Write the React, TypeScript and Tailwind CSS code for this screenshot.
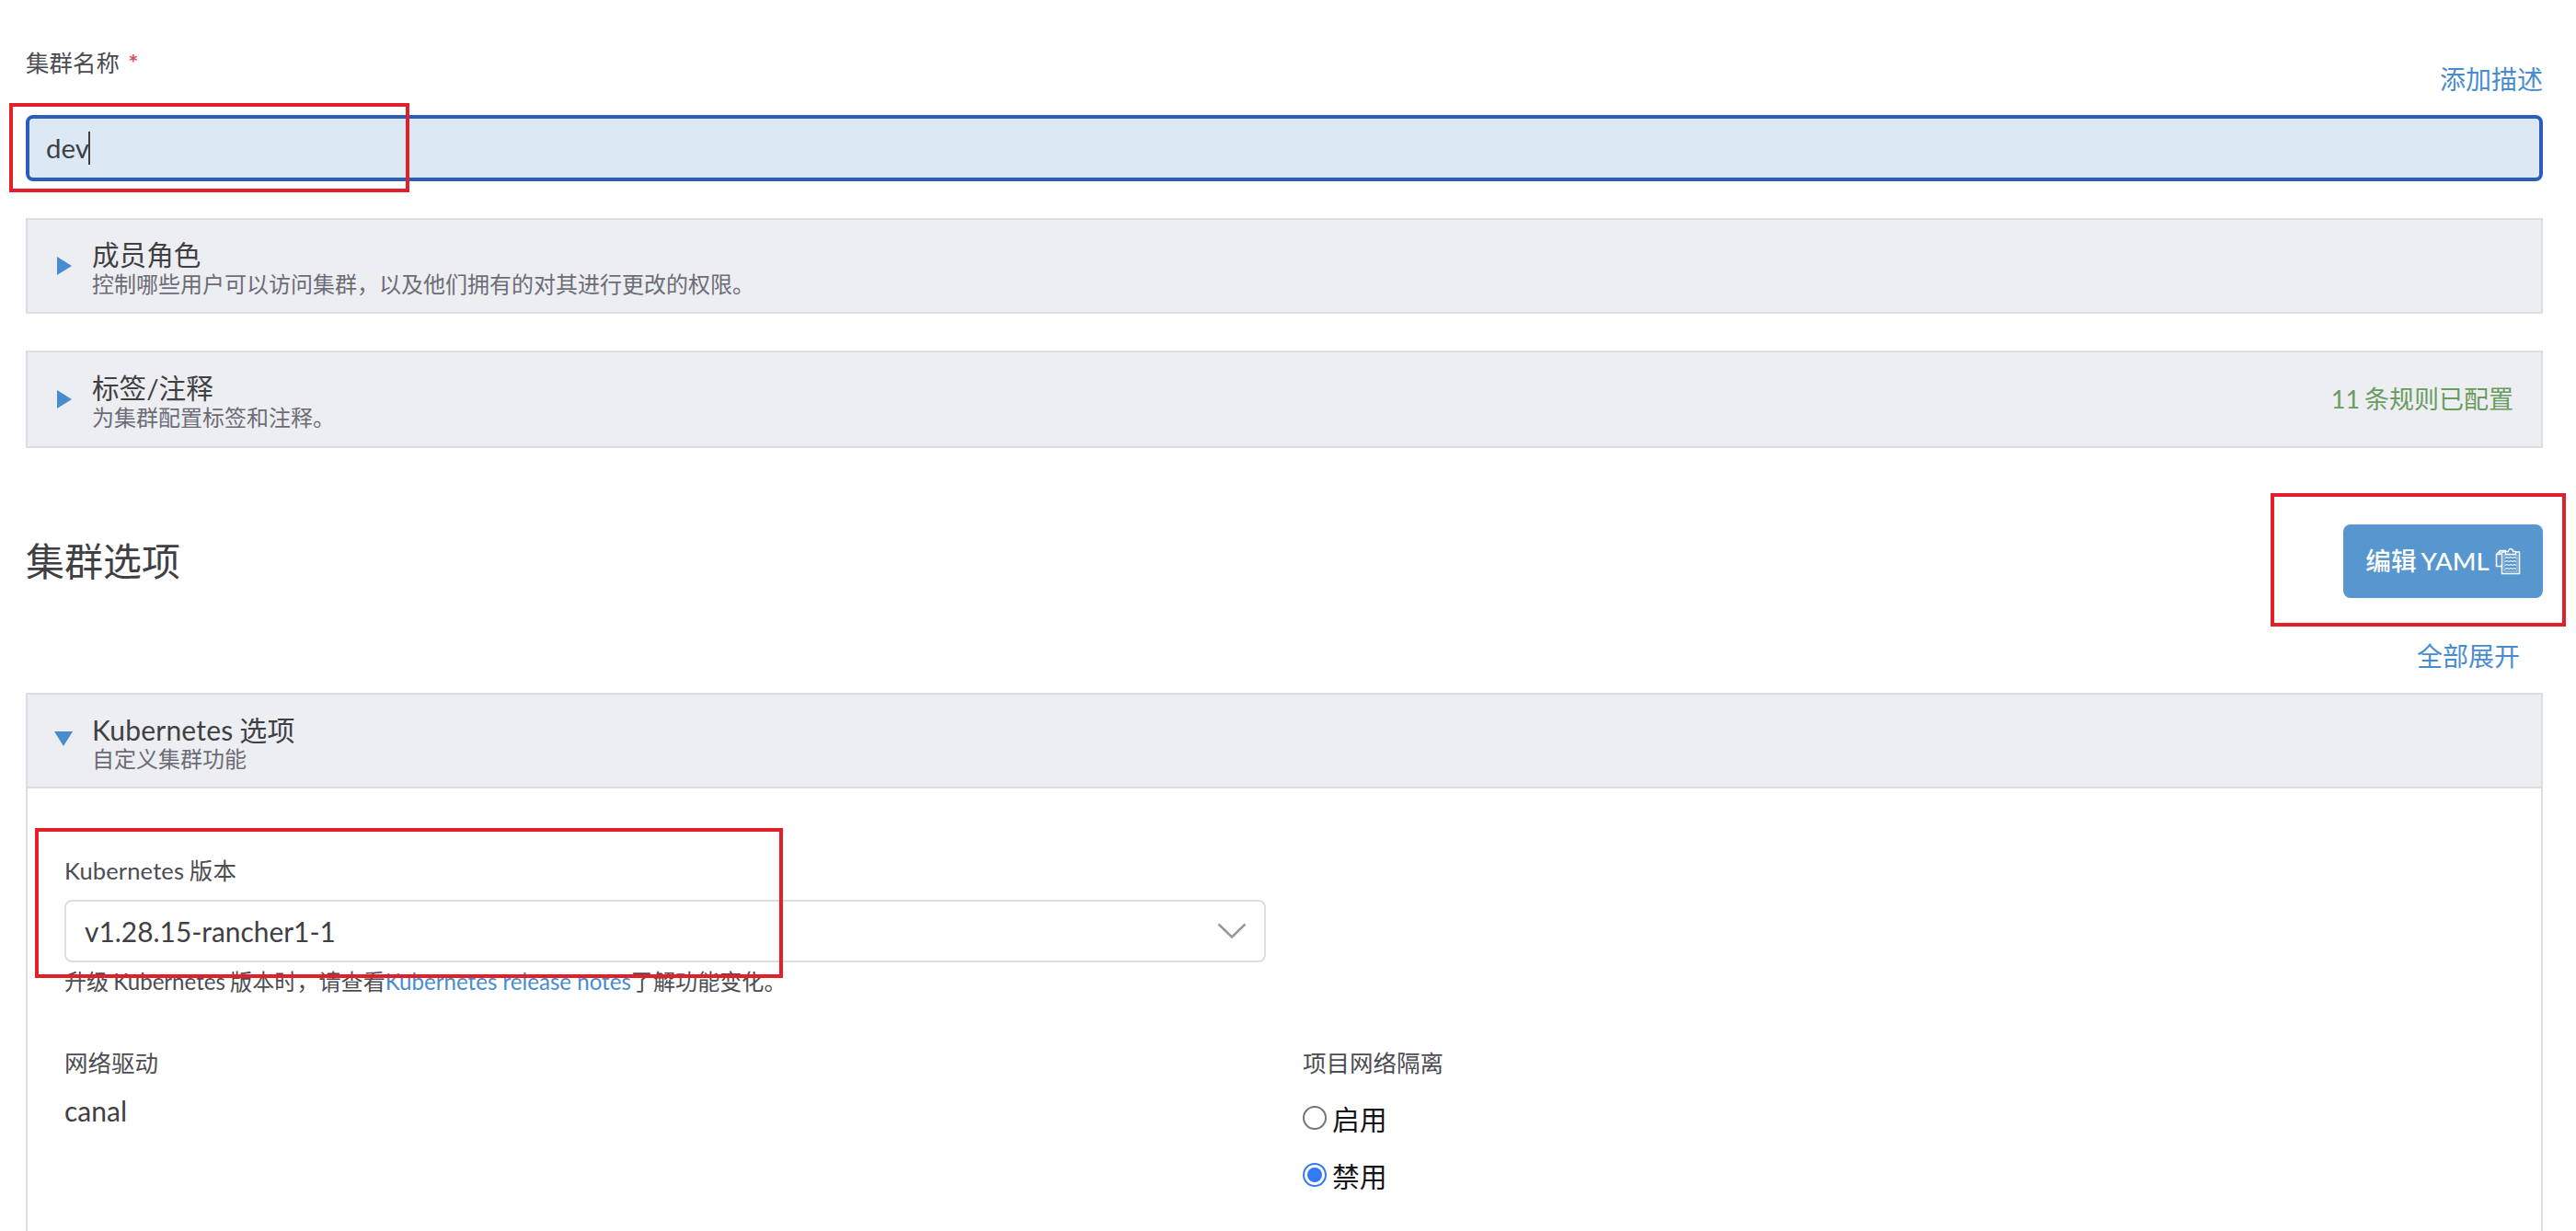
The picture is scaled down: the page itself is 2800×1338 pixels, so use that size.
import React, { useState } from 'react';

interface SectionHeaderProps {
  title: string;
  detail: string;
  open?: boolean;
  status?: string;
}

const SectionHeader: React.FC<SectionHeaderProps> = ({ title, detail, open, status }) => (
  <div className="flex h-full items-center pl-8 pr-[30px]">
    <div className="flex w-[38px] shrink-0">
      {open ? (
        <svg className="-ml-[3px] -mt-1 h-4 w-5" viewBox="0 0 20 16">
          <path d="M0 0h20L10 16z" fill="#478ccf" />
        </svg>
      ) : (
        <svg className="h-5 w-4" viewBox="0 0 16 20">
          <path d="M0 0v20L16 10z" fill="#478ccf" />
        </svg>
      )}
    </div>
    <div className="flex-1 pt-2">
      <div className={open ? 'text-[30px] leading-[32px] tracking-[0.2px] text-[#3f4044]' : 'text-[29.6px] leading-[32px] text-[#3f4044]'}>
        {title}
      </div>
      <div className="text-[24px] leading-[32px] text-[#6c6c76]">{detail}</div>
    </div>
    {status && <div className="text-[27px] text-[#6a9b5f] [word-spacing:-2px]">{status}</div>}
  </div>
);

const ClipboardIcon = () => (
  <svg className="h-[30px] w-[28px]" viewBox="0 0 28 30" fill="none" stroke="#fff">
    <path d="M7 20.500H1.500V7.500L5.500 3.500H12M5.500 3.500v4h-4" strokeWidth="1.500" />
    <path d="M7.500 5H26.500V28.500H7.500z" strokeWidth="1.500" />
    <path d="M10 8H24V26H10z" strokeOpacity="0.500" />
    <path d="M11.500 7.500V4.500H14.500a2.500 3 0 0 1 5 0H22.500V7.500z" fill="#5896cf" strokeWidth="1.300" />
    <path
      d="M11 11.500l2-1 2 1 2-1 2 1 2-1 2 1M11 15.500l2-1 2 1 2-1 2 1 2-1 2 1M11 19.500l2-1 2 1 2-1 2 1 2-1 2 1M11 23.500l2-1 2 1 2-1 2 1 2-1 2 1"
      strokeWidth="1.100"
    />
  </svg>
);

// red outlines drawn over the form
const Highlight = ({ className }: { className: string }) => (
  <div className={`pointer-events-none absolute border-4 border-[#e3202a] ${className}`} />
);

const isolationOptions = [
  { value: 'enabled', label: '启用' },
  { value: 'disabled', label: '禁用' },
];

export default function App() {
  const [isolation, setIsolation] = useState('disabled');

  return (
    <div className="relative h-[1338px] w-[2800px] overflow-hidden bg-white pl-[28px] pr-[36px] font-['Lato','Noto_Sans_CJK_SC',sans-serif] text-[#3f4044] [word-spacing:-1px]">
      <div className="flex h-[125px] items-start justify-between">
        <label className="mt-[50px] text-[25.5px] leading-9 text-[#4c4c52]">
          集群名称 <span className="ml-1 font-bold text-[#d9534f]">*</span>
        </label>
        <a className="mt-[68px] text-[28px] leading-9 text-[#478ccf]">添加描述</a>
      </div>

      <div className="flex h-[72px] items-center rounded-lg border-4 border-[#2b5dbb] bg-[#dce8f4] px-[18px] text-[29.4px]">
        <span>dev</span>
        <span className="-ml-px h-9 w-[2px] bg-[#3f4044]" />
      </div>

      <div className="mt-10 h-[104px] border-2 border-[#dcdee3] bg-[#edeef2]">
        <SectionHeader title="成员角色" detail="控制哪些用户可以访问集群，以及他们拥有的对其进行更改的权限。" />
      </div>
      <div className="mt-10 h-[106px] border-2 border-[#dcdee3] bg-[#edeef2]">
        <SectionHeader title="标签/注释" detail="为集群配置标签和注释。" status="11 条规则已配置" />
      </div>

      <div className="mt-[83px] flex h-20 items-center justify-between">
        <h2 className="text-[42px] leading-[60px]">集群选项</h2>
        <button className="flex h-20 w-[217px] items-center justify-center gap-1.5 rounded-lg bg-[#5896cf] text-[27.6px] font-medium text-white [word-spacing:-2px]">
          <span>编辑 YAML</span>
          <ClipboardIcon />
        </button>
      </div>

      <div className="flex h-[103px] justify-end pr-[25px]">
        <a className="mt-[45px] text-[28px] leading-9 text-[#478ccf]">全部展开</a>
      </div>

      <div className="h-[600px] border-2 border-[#dcdee3]">
        <div className="h-[102px] border-b-2 border-[#dcdee3] bg-[#edeef2]">
          <SectionHeader title="Kubernetes 选项" detail="自定义集群功能" open />
        </div>
        <div className="px-10 pt-[71px]">
          <label className="block text-[25.5px] leading-9 tracking-[0.15px] text-[#4c4c52]">Kubernetes 版本</label>
          <div className="mt-[14px] flex h-[68px] w-[1306px] items-center justify-between rounded-lg border-2 border-[#dcdee3] pl-5 pr-[19px] text-[29.9px]">
            <span>v1.28.15-rancher1-1</span>
            <svg className="h-[18px] w-[32px]" viewBox="0 0 32 18" fill="none" stroke="#95999e" strokeWidth="2.500">
              <path d="M1.500 1.500 16 15.500 30.500 1.500" />
            </svg>
          </div>
          <p className="mt-[3px] text-[24.1px] leading-9 text-[#4c4c52]">
            升级 Kubernetes 版本时，请查看<a className="text-[#478ccf] [word-spacing:0]">Kubernetes release notes</a>了解功能变化。
          </p>
          <div className="mt-[52px] grid grid-cols-2">
            <div>
              <label className="block text-[25.5px] leading-9 text-[#4c4c52]">网络驱动</label>
              <div className="mt-4 text-[30px] leading-9">canal</div>
            </div>
            <div className="pl-5">
              <label className="block text-[25.5px] leading-9 text-[#4c4c52]">项目网络隔离</label>
              <div className="mt-[26px] flex flex-col gap-[26px]">
                {isolationOptions.map(o => (
                  <label key={o.value} className="flex h-9 items-center gap-1.5 text-[29.8px] text-[#141419]">
                    <input
                      type="radio"
                      name="isolation"
                      className="peer sr-only"
                      checked={isolation === o.value}
                      onChange={() => setIsolation(o.value)}
                    />
                    <span className="-mt-1 flex h-[26px] w-[26px] items-center justify-center rounded-full border-2 border-[#767676] peer-checked:border-[#3478f6]">
                      {isolation === o.value && <span className="h-4 w-4 rounded-full bg-[#3478f6]" />}
                    </span>
                    <span>{o.label}</span>
                  </label>
                ))}
              </div>
            </div>
          </div>
        </div>
      </div>

      <Highlight className="left-[10px] top-[112px] h-[97px] w-[435px]" />
      <Highlight className="left-[2468px] top-[536px] h-[145px] w-[321px]" />
      <Highlight className="left-[38px] top-[900px] h-[163px] w-[813px]" />
    </div>
  );
}
